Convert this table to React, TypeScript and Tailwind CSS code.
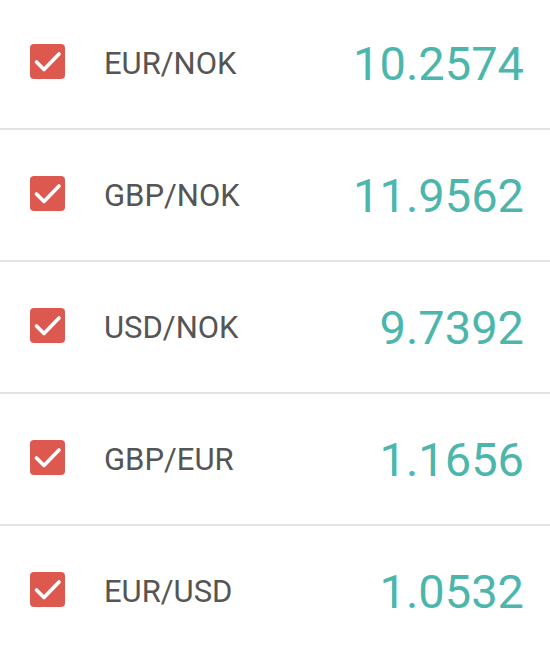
import React from "react";

const rows = [
  { pair: "EUR/NOK", value: "10.2574" },
  { pair: "GBP/NOK", value: "11.9562" },
  { pair: "USD/NOK", value: "9.7392" },
  { pair: "GBP/EUR", value: "1.1656" },
  { pair: "EUR/USD", value: "1.0532" },
];

function Check() {
  return (
    <div className="w-[35px] h-[35px] rounded-[4px] bg-[#dd5950] flex items-center justify-center shrink-0 mb-[3px]">
      <svg width="35" height="35" viewBox="0 0 35 35">
        <path
          d="M6.5 18 L14 25.5 L29 10"
          fill="none"
          stroke="#ffffff"
          strokeWidth="3.6"
          strokeLinecap="round"
          strokeLinejoin="round"
        />
      </svg>
    </div>
  );
}

export default function App() {
  return (
    <div
      className="w-[550px] h-[650px] bg-white overflow-hidden"
      style={{ fontFamily: "Roboto, 'Noto Sans', sans-serif" }}
    >
      <div className="-mt-[2px]">
        {rows.map((r) => (
          <div
            key={r.pair}
            className="h-[132px] border-b-2 border-[#e3e3e3] flex items-center pl-[30px] pr-[26px]"
          >
            <Check />
            <div className="ml-[39px] text-[31px] leading-none text-[#555555]">{r.pair}</div>
            <div className="ml-auto text-[47px] leading-none text-[#4db6ac]">{r.value}</div>
          </div>
        ))}
      </div>
    </div>
  );
}
